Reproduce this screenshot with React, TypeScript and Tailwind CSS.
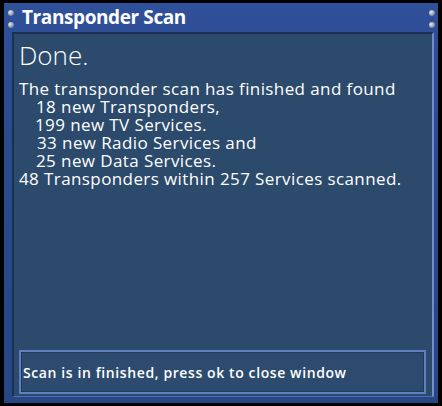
const rivet =
	'absolute h-[6px] w-[6px] rounded-full bg-[radial-gradient(circle_at_35%_35%,#e8ecf2,#8a94a6_60%,#3a4660)]';

export default function App() {
	return (
		<div className="h-[406px] w-[442px] bg-black pt-[3px] pb-[3px] pl-[4px] pr-[4px]">
			<div className="relative flex h-full flex-col bg-[#2a4a8c] bg-[linear-gradient(180deg,#2f509a_0%,#2a4a8c_40%,#264685_100%)]">
				{/* window screws */}
				<span className={`${rivet} left-[4px] top-[7px]`} />
				<span className={`${rivet} left-[4px] top-[19px]`} />
				<span className={`${rivet} right-[3px] top-[7px]`} />
				<span className={`${rivet} right-[3px] top-[19px]`} />

				<div className="flex h-[29px] items-center pl-[18px]">
					<span className="font-['Open_Sans',sans-serif] text-[19px] font-bold leading-none tracking-[-0.4px] text-white">
						Transponder Scan
					</span>
				</div>

				<div className="mb-[6px] ml-[8px] mr-[4px] flex flex-1 flex-col border-l-[2px] border-r-[2px] border-t-[2px] border-b-[1px] border-l-[#1b3152] border-t-[#1b3152] border-r-[#6f8fca] border-b-[#4d6fae] bg-[#2b4a6c] pl-[5px] pr-[6px] pb-[2px]">
					<div className="font-['Open_Sans',sans-serif] text-white">
						<p className="mt-[6px] text-[26px] font-light leading-[30px]">Done.</p>
						<div className="mt-[10px] text-[17px] leading-[18px] tracking-[0.4px]">
							<p>The transponder scan has finished and found</p>
							<p className="pl-[17px]">18 new Transponders,</p>
							<p className="pl-[16px]">199 new TV Services.</p>
							<p className="pl-[18px]">33 new Radio Services and</p>
							<p className="pl-[17px]">25 new Data Services.</p>
							<p>48 Transponders within 257 Services scanned.</p>
						</div>
					</div>

					<div className="mt-auto flex h-[44px] items-center border-[2px] border-[#5f7fc0] bg-[#2c4b6e] pl-[2px] shadow-[inset_0_0_0_1px_#22395a]">
						<span className="font-['Open_Sans',sans-serif] text-[14px] font-semibold tracking-[0.6px] text-white">
							Scan is in finished, press ok to close window
						</span>
					</div>
				</div>
			</div>
		</div>
	);
}
